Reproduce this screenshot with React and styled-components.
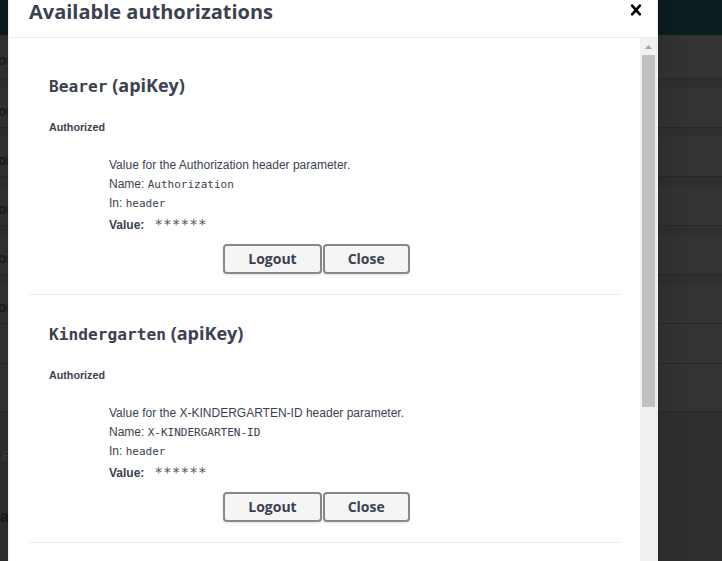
import React from "react";
import styled, { createGlobalStyle } from "styled-components";

const GlobalStyle = createGlobalStyle`
  html, body {
    margin: 0;
    padding: 0;
  }
  body {
    background: #2f2f2f;
    font-family: "Liberation Sans", Arial, sans-serif;
    overflow: hidden;
  }
  * {
    box-sizing: border-box;
  }
`;

const auths = [
  {
    name: "Bearer",
    desc: "Value for the Authorization header parameter.",
    param: "Authorization",
  },
  {
    name: "Kindergarten",
    desc: "Value for the X-KINDERGARTEN-ID header parameter.",
    param: "X-KINDERGARTEN-ID",
  },
];

// dimmed swagger page behind the dialog
const ops = [
  { h: 44, gap: 9, label: "on" },
  { h: 40, gap: 9, label: "on" },
  { h: 40, gap: 9, label: "on" },
  { h: 40, gap: 9, label: "on" },
  { h: 40, gap: 9, label: "on" },
  { h: 40, gap: 0, label: "on" },
  { h: 40, gap: 0, label: "" },
  { h: 48, gap: 0, label: "" },
];

export default function App() {
  return (
    <Page>
      <GlobalStyle />
      <Topbar />
      {ops.map((op, i) => (
        <OpBlock key={i} $h={op.h} $gap={op.gap}>
          <OpLabel>{op.label}</OpLabel>
        </OpBlock>
      ))}
      <Models>
        <GhostLetter>E</GhostLetter>
        <ModelLetter>a</ModelLetter>
      </Models>

      <Modal>
        <Header>
          <Title>Available authorizations</Title>
          <CloseButton aria-label="Close">
            <svg width="22" height="22" viewBox="0 0 20 20">
              <path
                fill="#000"
                d="M14.348 14.849c-.469.469-1.229.469-1.697 0L10 11.819l-2.651 3.029c-.469.469-1.229.469-1.697 0-.469-.469-.469-1.229 0-1.697l2.758-3.15-2.759-3.152c-.469-.469-.469-1.228 0-1.697.469-.469 1.228-.469 1.697 0L10 8.183l2.651-3.031c.469-.469 1.228-.469 1.697 0 .469.469.469 1.229 0 1.697l-2.758 3.152 2.758 3.15c.469.469.469 1.229 0 1.698z"
              />
            </svg>
          </CloseButton>
        </Header>
        <Body>
          <Content>
            {auths.map((a) => (
              <AuthContainer key={a.name}>
                <AuthTitle>
                  <code>{a.name}</code>&nbsp;(apiKey)
                </AuthTitle>
                <Status>Authorized</Status>
                <Params>
                  <ParamRow>{a.desc}</ParamRow>
                  <ParamRow>
                    Name: <Code>{a.param}</Code>
                  </ParamRow>
                  <ParamRow>
                    In: <Code>header</Code>
                  </ParamRow>
                  <ParamRow $value>
                    <ValueLabel>Value:</ValueLabel>
                    <Masked>******</Masked>
                  </ParamRow>
                </Params>
                <BtnWrapper>
                  <Btn>Logout</Btn>
                  <Btn>Close</Btn>
                </BtnWrapper>
              </AuthContainer>
            ))}
          </Content>
          <Track>
            <TrackArrow>
              <svg width="7" height="4" viewBox="0 0 7 4">
                <path d="M3.5 0L7 4H0z" fill="#a3a3a3" />
              </svg>
            </TrackArrow>
            <Thumb />
          </Track>
        </Body>
      </Modal>
    </Page>
  );
}

const Page = styled.div`
  position: relative;
  width: 722px;
  height: 561px;
  overflow: hidden;
  background: #2f2f2f;
`;

const Topbar = styled.div`
  height: 35px;
  background: #0b1d1f;
`;

const OpBlock = styled.div`
  height: ${(p) => p.$h}px;
  margin-bottom: ${(p) => p.$gap}px;
  background: #333333;
  border-bottom: 1px solid #282828;
  display: flex;
  align-items: center;
  padding-top: 6px;
`;

const OpLabel = styled.span`
  margin-left: -2px;
  font: 700 14px "Liberation Sans", Arial, sans-serif;
  color: #1b1b1b;
`;

const Models = styled.div`
  display: flex;
  flex-direction: column;
  padding-top: 35px;
  gap: 44px;
`;

const GhostLetter = styled.span`
  margin-left: 2px;
  font: 400 15px "Liberation Sans", Arial, sans-serif;
  color: #3d3d3d;
`;

const ModelLetter = styled.span`
  margin-left: 0;
  font: 700 16px "Liberation Sans", Arial, sans-serif;
  color: #1a1a1a;
`;

const Modal = styled.div`
  position: absolute;
  top: -15px;
  left: 8px;
  width: 650px;
  height: 600px;
  background: #fff;
  border: 1px solid #ebebeb;
  border-radius: 4px;
  display: flex;
  flex-direction: column;
  box-shadow: 0 10px 30px 0 rgba(0, 0, 0, 0.2);
`;

const Header = styled.div`
  display: flex;
  align-items: center;
  padding: 12px 0;
  border-bottom: 1px solid #ebebeb;
`;

const Title = styled.h3`
  flex: 1;
  margin: 0;
  padding: 0 20px;
  font: 700 20px "Open Sans", sans-serif;
  color: #3b4151;
`;

const CloseButton = styled.button`
  display: flex;
  align-items: center;
  padding: 0 10px;
  margin-top: -4px;
  background: none;
  border: none;
  cursor: pointer;
`;

const Body = styled.div`
  flex: 1;
  display: flex;
  min-height: 0;
`;

const Content = styled.div`
  flex: 1;
  padding: 19px 20px 0;
  overflow: hidden;
`;

const Track = styled.div`
  width: 17px;
  background: #f1f1f1;
  display: flex;
  flex-direction: column;
`;

const TrackArrow = styled.div`
  height: 17px;
  display: flex;
  align-items: center;
  justify-content: center;
`;

const Thumb = styled.div`
  height: 352px;
  margin: 0 2px;
  background: #c1c1c1;
`;

const AuthContainer = styled.div`
  padding: 10px 20px;
  margin-bottom: 10px;
  border-bottom: 1px solid #ebebeb;
`;

const AuthTitle = styled.h4`
  margin: 6px 0 0;
  font: 700 18px/25px "Open Sans", sans-serif;
  color: #3b4151;

  code {
    font: 700 16.2px "DejaVu Sans Mono", monospace;
  }
`;

const Status = styled.h6`
  margin: 23px 0 0;
  font: 700 10.72px/12px "Liberation Sans", Arial, sans-serif;
  color: #3b4151;
`;

const Params = styled.div`
  margin: 23px 0 0 60px;
  font-size: 12px;
  color: #3b4151;
`;

const ParamRow = styled.div`
  height: ${(p) => (p.$value ? 24 : 19)}px;
  line-height: ${(p) => (p.$value ? 24 : 19)}px;
  display: flex;
  align-items: baseline;
  white-space: pre;
`;

const Code = styled.code`
  font: 400 11px "DejaVu Sans Mono", monospace;
  color: #3b4151;
`;

const ValueLabel = styled.label`
  font-weight: 700;
`;

const Masked = styled.code`
  margin-left: 10px;
  font: 400 14.5px "DejaVu Sans Mono", monospace;
  color: #555;
`;

const BtnWrapper = styled.div`
  display: flex;
  justify-content: center;
  gap: 1px;
  padding: 7px 16px 10px 0;
`;

const Btn = styled.button`
  padding: 5px 23px;
  background: #f5f5f5;
  border: 2px solid #888;
  border-radius: 4px;
  box-shadow: 0 1px 2px rgba(0, 0, 0, 0.1);
  font: 700 14px/16px "Open Sans", sans-serif;
  color: #3b4151;
  cursor: pointer;
`;
